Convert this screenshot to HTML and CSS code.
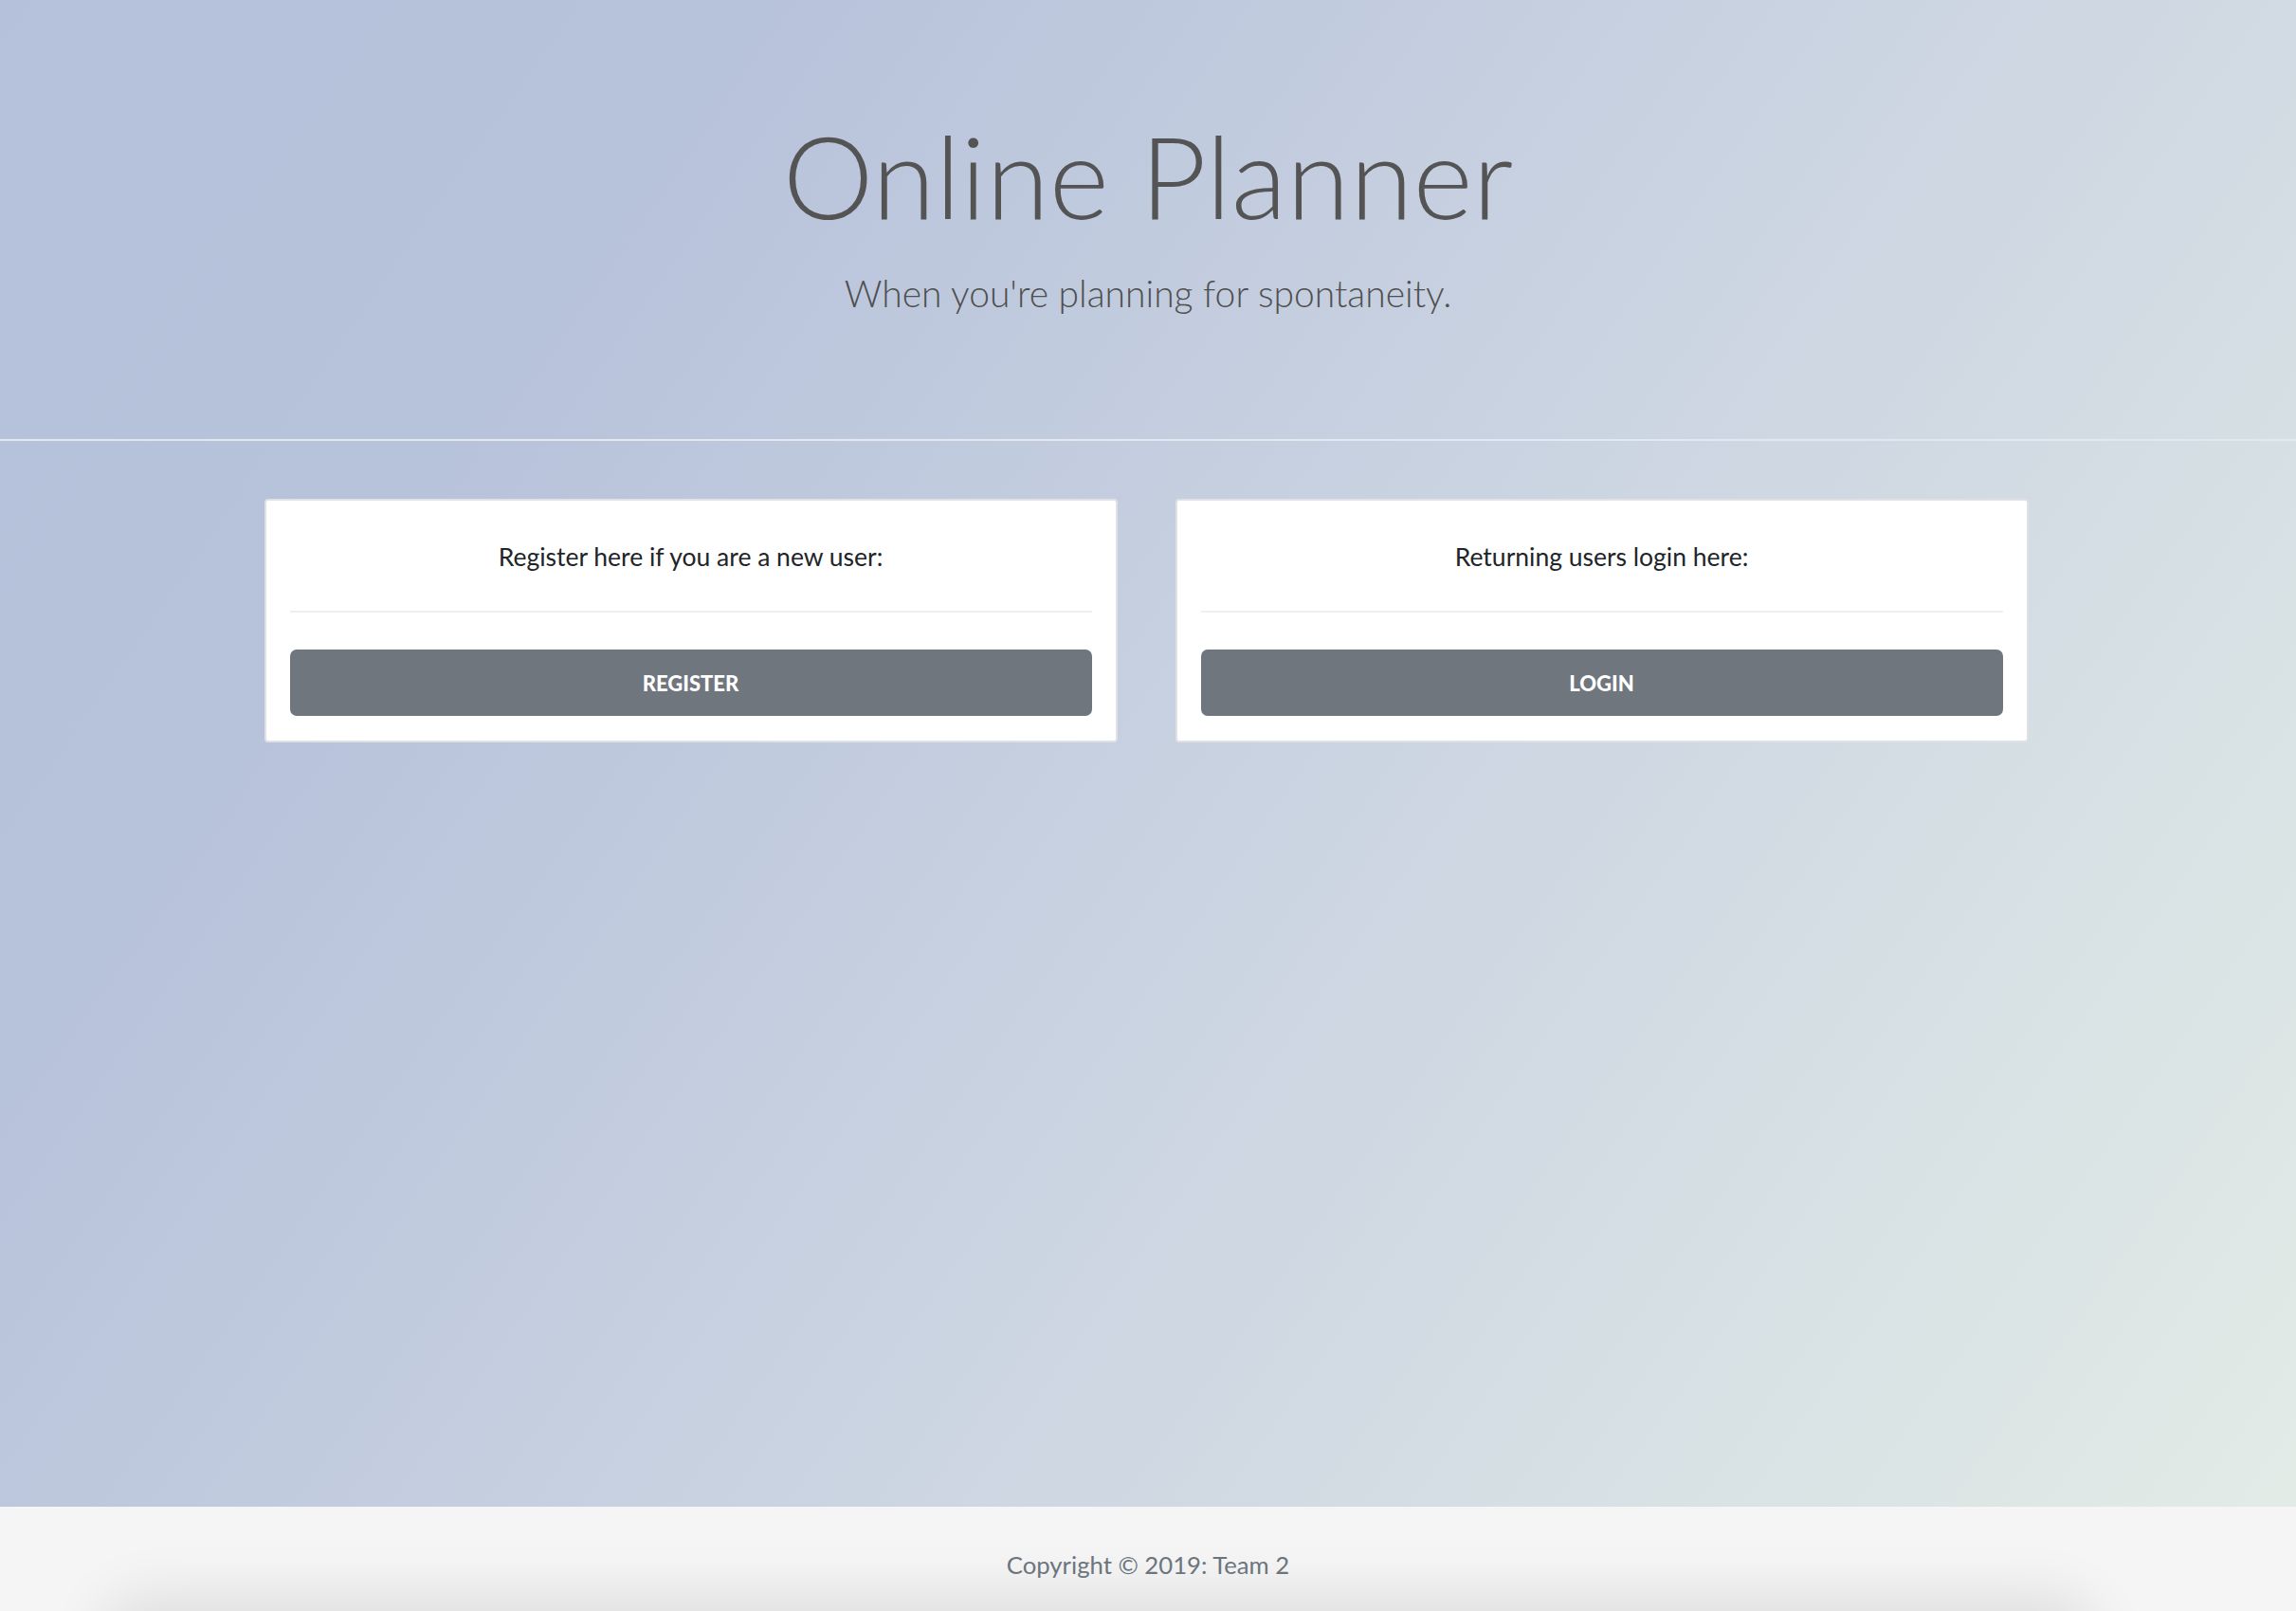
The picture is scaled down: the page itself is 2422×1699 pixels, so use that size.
FILE: index.html
```html
<!DOCTYPE html>
<html lang="en">
<head>
<meta charset="utf-8">
<title>Online Planner</title>
<link rel="stylesheet" href="styles.css">
</head>
<body>
<div class="page">
  <main class="main">
    <header class="jumbotron">
      <h1 class="title">Online Planner</h1>
      <p class="lead">When you're planning for spontaneity.</p>
    </header>
    <hr class="rule">
    <section class="cards">
      <div class="card">
        <p class="card-text">Register here if you are a new user:</p>
        <hr class="card-rule">
        <button class="btn" type="button">Register</button>
      </div>
      <div class="card">
        <p class="card-text">Returning users login here:</p>
        <hr class="card-rule">
        <button class="btn" type="button">Login</button>
      </div>
    </section>
  </main>
  <footer class="footer">
    <p class="copy">Copyright © 2019: Team 2</p>
    <div class="footer-shadow"></div>
  </footer>
</div>
</body>
</html>
```

FILE: styles.css
```css
html, body {
  margin: 0;
  padding: 0;
  height: 100%;
}

body {
  font-family: Lato, "Open Sans", sans-serif;
  color: #212529;
  overflow: hidden;
}

.page {
  display: flex;
  flex-direction: column;
  min-height: 100vh;
}

.main {
  flex: 1;
  background: linear-gradient(125deg, #b5c0da 0%, #b7c2db 22%, #cdd6e2 60%, #e2ebe6 100%);
  display: flex;
  flex-direction: column;
}

.jumbotron {
  padding: 112px 0 124px;
  text-align: center;
  color: #545454;
}

.title {
  margin: 0;
  font-size: 121px;
  font-weight: 300;
  line-height: 1.2;
  letter-spacing: 0;
}

.lead {
  margin: 23px 0 0;
  font-size: 39px;
  font-weight: 300;
  line-height: 1.5;
  color: #4f4f4f;
}

.rule {
  margin: 0;
  border: 0;
  height: 2px;
  background: #e4e7ef;
}

.cards {
  display: flex;
  justify-content: center;
  gap: 61px;
  margin-top: 61px;
  padding-right: 4px;
}

.card {
  width: 900px;
  box-sizing: border-box;
  background: #fff;
  border: 2px solid #dfe1e6;
  border-radius: 4px;
  padding: 40px 25px 26px;
  display: flex;
  flex-direction: column;
}

.card-text {
  margin: 0;
  text-align: center;
  font-size: 26.5px;
  line-height: 1.5;
  color: #212529;
}

.card-rule {
  margin: 37px 0 39px;
  border: 0;
  height: 2px;
  background: #eeeff1;
}

.btn {
  height: 70px;
  border: 0;
  border-radius: 7px;
  background: #70767e;
  color: #fff;
  font-family: Lato, "Open Sans", sans-serif;
  font-weight: 900;
  font-size: 22px;
  text-transform: uppercase;
  cursor: pointer;
}

.footer {
  position: relative;
  height: 110px;
  background: #f5f5f5;
  overflow: hidden;
  display: flex;
  justify-content: center;
}

.copy {
  margin: 42px 0 0;
  font-size: 25.7px;
  line-height: 1.5;
  color: #6c757d;
  position: relative;
  z-index: 1;
}

.footer-shadow {
  position: absolute;
  left: 124px;
  right: 229px;
  top: 112px;
  height: 60px;
  box-shadow: 0 0 60px 20px rgba(0, 0, 0, 0.09);
  border-radius: 30px;
}
```
